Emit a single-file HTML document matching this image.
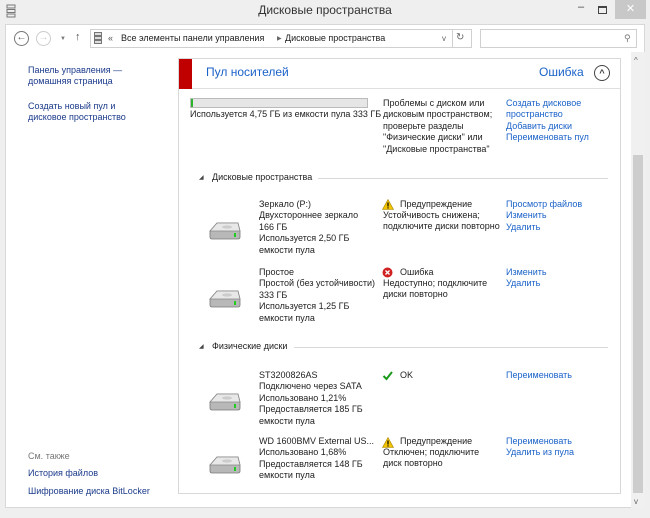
<!DOCTYPE html>
<html><head><meta charset="utf-8"><style>
*{margin:0;padding:0;box-sizing:border-box}
body{width:650px;height:518px;background:#efefef;font-family:"Liberation Sans","DejaVu Sans",sans-serif;font-size:9px;color:#1e1e1e;position:relative;overflow:hidden}
.a{position:absolute;white-space:nowrap;line-height:11.4px}
.l{color:#1a62c8}
.nav{color:#1a3a8a}
.hr{position:absolute;height:1px;background:#d8d8d8}
</style></head><body>
<svg class="a" style="left:6px;top:4px" width="10" height="14"><rect x="1" y="1" width="8" height="3" fill="none" stroke="#777"/><rect x="1" y="5.5" width="8" height="3" fill="none" stroke="#777"/><rect x="1" y="10" width="8" height="3" fill="none" stroke="#777"/></svg>
<div class="a" style="left:0;top:5px;width:650px;text-align:center;font-size:12px;color:#333">Дисковые пространства</div>
<div class="a" style="left:578px;top:2px;font-size:11px;color:#444">–</div>
<div class="a" style="left:598px;top:6px;width:9px;height:8px;border:1px solid #444;border-top-width:2px"></div>
<div class="a" style="left:615px;top:0;width:31px;height:19px;background:#c8c8c8;color:#fff;text-align:center;font-size:11px;line-height:19px">✕</div>
<!-- toolbar -->
<div class="a" style="left:5px;top:24px;width:640px;height:28px;background:#fff;border:1px solid #d8d8d8;border-bottom:none"></div>
<div class="a" style="left:14px;top:31px;width:15px;height:15px;border:1.5px solid #777;border-radius:50%;text-align:center;line-height:12px;font-size:10px;color:#555">←</div>
<div class="a" style="left:36px;top:31px;width:15px;height:15px;border:1.5px solid #ccc;border-radius:50%;text-align:center;line-height:12px;font-size:10px;color:#ccc">→</div>
<div class="a" style="left:60px;top:34px;font-size:6px;color:#777">▼</div>
<div class="a" style="left:75px;top:32px;font-size:11px;color:#555">↑</div>
<div class="a" style="left:90px;top:29px;width:382px;height:19px;border:1px solid #d0d0d0"></div>
<svg class="a" style="left:94px;top:32px" width="8" height="13"><rect x="0.5" y="0.5" width="7" height="3" fill="#ddd" stroke="#777"/><rect x="0.5" y="4.5" width="7" height="3" fill="#ddd" stroke="#777"/><rect x="0.5" y="8.5" width="7" height="3" fill="#ddd" stroke="#777"/></svg>
<div class="a" style="left:108px;top:33px;color:#555">«</div>
<div class="a" style="left:121px;top:33px">Все элементы панели управления</div>
<div class="a" style="left:277px;top:34px;font-size:6px;color:#666">▶</div>
<div class="a" style="left:285px;top:33px">Дисковые пространства</div>
<div class="a" style="left:442px;top:33px;color:#666;font-size:8px">v</div>
<div class="a" style="left:452px;top:29px;width:1px;height:19px;background:#d0d0d0"></div>
<div class="a" style="left:456px;top:32px;color:#666;font-size:10px">↻</div>
<div class="a" style="left:480px;top:29px;width:157px;height:19px;border:1px solid #d0d0d0"></div>
<div class="a" style="left:624px;top:33px;color:#777;font-size:9px">⚲</div>
<!-- content -->
<div class="a" style="left:5px;top:52px;width:640px;height:456px;background:#fff;border:1px solid #d8d8d8;border-top:none"></div>
<div class="a" style="left:631px;top:52px;width:14px;height:456px;background:#f0f0f0"></div>
<div class="a" style="left:633px;top:155px;width:10px;height:338px;background:#cdcdcd"></div>
<div class="a" style="left:634px;top:55px;font-size:8px;color:#666">^</div>
<div class="a" style="left:634px;top:496px;font-size:8px;color:#666">v</div>
<div class="a nav" style="left:28px;top:65px">Панель управления —<br>домашняя страница</div>
<div class="a nav" style="left:28px;top:101px">Создать новый пул и<br>дисковое пространство</div>
<div class="a" style="left:28px;top:451px;color:#777">См. также</div>
<div class="a nav" style="left:28px;top:468px">История файлов</div>
<div class="a nav" style="left:28px;top:486px">Шифрование диска BitLocker</div>
<!-- panel -->
<div class="a" style="left:178px;top:58px;width:443px;height:436px;border:1px solid #d8d8d8"></div>
<div class="a" style="left:179px;top:59px;width:441px;height:30px;border-bottom:1px solid #e0e0e0"></div>
<div class="a" style="left:179px;top:59px;width:13px;height:30px;background:#c00000"></div>
<div class="a" style="left:206px;top:67px;font-size:12px;color:#1a62c8">Пул носителей</div>
<div class="a" style="left:539px;top:67px;font-size:12px;color:#1a62c8">Ошибка</div>
<div class="a" style="left:594px;top:65px;width:16px;height:16px;border:1.5px solid #444;border-radius:50%;text-align:center;font-size:9px;line-height:14px;font-weight:bold;color:#333">^</div>
<div class="a" style="left:190px;top:98px;width:178px;height:10px;background:#e6e6e6;border:1px solid #bbb"></div>
<div class="a" style="left:191px;top:99px;width:2px;height:8px;background:#2db32d"></div>
<div class="a" style="left:190px;top:109px">Используется 4,75 ГБ из емкости пула 333 ГБ</div>
<div class="a" style="left:383px;top:98px">Проблемы с диском или<br>дисковым пространством;<br>проверьте разделы<br>"Физические диски" или<br>"Дисковые пространства"</div>
<div class="a l" style="left:506px;top:98px">Создать дисковое<br>пространство<br>Добавить диски<br>Переименовать пул</div>
<div class="a" style="left:199px;top:173px;font-size:6px;color:#444">◢</div>
<div class="a" style="left:212px;top:172px">Дисковые пространства</div>
<div class="hr" style="left:318px;top:178px;width:290px"></div>
<div class="a" style="left:199px;top:342px;font-size:6px;color:#444">◢</div>
<div class="a" style="left:212px;top:341px">Физические диски</div>
<div class="hr" style="left:294px;top:347px;width:314px"></div>
<svg width="0" height="0" style="position:absolute"><defs><g id="d"><path d="M2 12 L9 4 L30 4 L32 12 L32 18 Q32 20 30 20 L4 20 Q2 20 2 18Z" fill="#b8b8b8" stroke="#777" stroke-width="0.8"/><path d="M2 12 L9 4 L30 4 L32 12Z" fill="#e8e8e8" stroke="#888" stroke-width="0.8"/><ellipse cx="19" cy="8" rx="5" ry="1.6" fill="#ccc"/><rect x="26" y="14" width="2" height="4" fill="#2c2"/></g></defs></svg>
<svg class="a" style="left:208px;top:219px" width="34" height="22"><use href="#d"/></svg>
<svg class="a" style="left:208px;top:287px" width="34" height="22"><use href="#d"/></svg>
<svg class="a" style="left:208px;top:390px" width="34" height="22"><use href="#d"/></svg>
<svg class="a" style="left:208px;top:453px" width="34" height="22"><use href="#d"/></svg>
<div class="a" style="left:259px;top:199px">Зеркало (P:)<br>Двухстороннее зеркало<br>166 ГБ<br>Используется 2,50 ГБ<br>емкости пула</div>
<div class="a" style="left:259px;top:267px">Простое<br>Простой (без устойчивости)<br>333 ГБ<br>Используется 1,25 ГБ<br>емкости пула</div>
<div class="a" style="left:259px;top:370px">ST3200826AS<br>Подключено через SATA<br>Использовано 1,21%<br>Предоставляется 185 ГБ<br>емкости пула</div>
<div class="a" style="left:259px;top:436px">WD 1600BMV External US...<br>Использовано 1,68%<br>Предоставляется 148 ГБ<br>емкости пула</div>
<svg class="a" style="left:382px;top:199px" width="12" height="11"><path d="M6 0.5 L11.5 10.5 L0.5 10.5Z" fill="#f5c400" stroke="#a08000" stroke-width="0.6"/><rect x="5.4" y="3.5" width="1.2" height="4" fill="#000"/><rect x="5.4" y="8.3" width="1.2" height="1.2" fill="#000"/></svg>
<svg class="a" style="left:382px;top:437px" width="12" height="11"><path d="M6 0.5 L11.5 10.5 L0.5 10.5Z" fill="#f5c400" stroke="#a08000" stroke-width="0.6"/><rect x="5.4" y="3.5" width="1.2" height="4" fill="#000"/><rect x="5.4" y="8.3" width="1.2" height="1.2" fill="#000"/></svg>
<svg class="a" style="left:382px;top:267px" width="11" height="11"><circle cx="5.5" cy="5.5" r="5" fill="#d02020"/><path d="M3.5 3.5 L7.5 7.5 M7.5 3.5 L3.5 7.5" stroke="#fff" stroke-width="1.4"/></svg>
<svg class="a" style="left:382px;top:370px" width="11" height="11"><path d="M1.5 6 L4.5 9 L10 2" stroke="#1a9a1a" stroke-width="2" fill="none"/></svg>
<div class="a" style="left:400px;top:199px">Предупреждение</div>
<div class="a" style="left:383px;top:210px">Устойчивость снижена;<br>подключите диски повторно</div>
<div class="a" style="left:400px;top:267px">Ошибка</div>
<div class="a" style="left:383px;top:278px">Недоступно; подключите<br>диски повторно</div>
<div class="a" style="left:400px;top:370px">OK</div>
<div class="a" style="left:400px;top:436px">Предупреждение</div>
<div class="a" style="left:383px;top:447px">Отключен; подключите<br>диск повторно</div>
<div class="a l" style="left:506px;top:199px">Просмотр файлов<br>Изменить<br>Удалить</div>
<div class="a l" style="left:506px;top:267px">Изменить<br>Удалить</div>
<div class="a l" style="left:506px;top:370px">Переименовать</div>
<div class="a l" style="left:506px;top:436px">Переименовать<br>Удалить из пула</div>
</body></html>
